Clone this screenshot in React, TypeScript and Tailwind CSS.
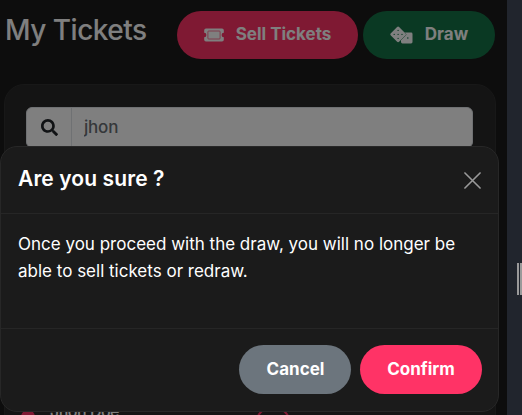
import React, { useState } from "react";
import { FaSearch } from "react-icons/fa";

type ButtonProps = {
  className: string;
  children: React.ReactNode;
  onClick?: () => void;
};

const PillButton = ({ className, children, onClick }: ButtonProps) => {
  return (
    <button
      type="button"
      onClick={onClick}
      className={`flex items-center justify-center rounded-full text-[17px] font-bold text-white ${className}`}
    >
      {children}
    </button>
  );
};

const TicketIcon = () => {
  return (
    <svg className="h-[14px] w-5" viewBox="0 0 20 14" fill="currentColor">
      <path d="M2 .5h16a1.8 1.8 0 0 1 1.8 1.8v2.5a2.2 2.2 0 0 0 0 4.4v2.5a1.8 1.8 0 0 1-1.8 1.8H2a1.8 1.8 0 0 1-1.8-1.8V9.2a2.2 2.2 0 0 0 0-4.4V2.3A1.8 1.8 0 0 1 2 .5z" />
      <rect
        x="3.9"
        y="3"
        width="12.2"
        height="8"
        rx="0.8"
        fill="none"
        stroke="#ff3366"
        strokeOpacity="0.75"
        strokeWidth="0.9"
      />
    </svg>
  );
};

const DiceIcon = () => {
  return (
    <svg className="h-[18px] w-[23px]" viewBox="0 0 23 18" fill="currentColor">
      <rect x="11" y="6.5" width="11.5" height="11" rx="1.4" />
      <path
        d="M6.9 1.2a1.7 1.7 0 0 1 2.4 0l6 6a1.7 1.7 0 0 1 0 2.4l-6 6a1.7 1.7 0 0 1-2.4 0l-6-6a1.7 1.7 0 0 1 0-2.4z"
        stroke="#157347"
        strokeWidth="0.8"
        paintOrder="stroke"
      />
      <g fill="#157347">
        <circle cx="8.1" cy="4.4" r="0.65" />
        <circle cx="4.2" cy="8.4" r="0.65" />
        <circle cx="8.1" cy="8.4" r="0.65" />
        <circle cx="12" cy="8.4" r="0.65" />
        <circle cx="8.1" cy="12.4" r="0.65" />
        <circle cx="17.8" cy="12" r="0.75" />
      </g>
    </svg>
  );
};

const TicketsPage = () => {
  const [search, setSearch] = useState("jhon");

  return (
    <div className="h-[415px] w-[507px] overflow-hidden bg-[#1a1a1a] pt-[11px]">
      <div className="flex h-12 pl-[5px]">
        <h1 className="w-[172px] pt-px text-[28px] leading-9 font-medium tracking-[-0.5px] whitespace-nowrap text-white">
          My Tickets
        </h1>
        <PillButton className="h-12 w-[181px] gap-3 bg-[#ff3366]">
          <TicketIcon />
          Sell Tickets
        </PillButton>
        <PillButton className="ml-[5px] h-12 w-[132px] gap-3 bg-[#157347]">
          <DiceIcon />
          Draw
        </PillButton>
      </div>

      <div className="mt-[25px] ml-1 h-[420px] w-[492px] rounded-[20px] border border-[#303030] bg-[#282828] pt-[22px] pl-[21px]">
        <div className="flex h-[41px] w-[447px] overflow-hidden rounded-md border border-[#dee2e6] bg-white">
          <span className="flex w-[45px] shrink-0 items-center justify-center border-r border-[#dee2e6] text-[#212529]">
            <FaSearch className="size-[17px]" />
          </span>
          <input
            className="w-full px-3 text-[17px] font-medium tracking-[-0.2px] text-[#6b7075] outline-none"
            value={search}
            onChange={(e) => setSearch(e.target.value)}
          />
        </div>
        <div className="mt-[251px] flex h-10 items-start text-white">
          <span className="mt-[11px] ml-[-5px] size-[14px] rounded-full bg-[#ff3366]" />
          <span className="ml-[15px] w-[205px] text-[16px] leading-6 font-medium tracking-[-0.5px]">
            Jhon Doe
          </span>
          <span className="mt-[7px] size-9 rounded-full border-2 border-[#ff3366]" />
        </div>
      </div>
    </div>
  );
};

type ModalProps = {
  onClose: () => void;
};

const ConfirmModal = ({ onClose }: ModalProps) => {
  return (
    <div className="absolute inset-y-0 left-0 w-[507px] bg-black/50 pt-[146px]">
      <div className="flex h-[266px] w-[499px] flex-col rounded-[17px] border border-[#272727] bg-[#1b1b1b] text-white">
        <div className="flex h-[67px] items-center justify-between border-b border-[#262626] pr-[17px] pl-[17px]">
          <h5 className="pb-0.5 text-[21px] font-semibold tracking-[0.1px]">
            Are you sure ?
          </h5>
          <button type="button" aria-label="Close" onClick={onClose}>
            <svg
              className="size-[17px]"
              viewBox="0 0 18 18"
              fill="none"
              stroke="#999999"
              strokeWidth="1.7"
              strokeLinecap="round"
            >
              <path d="M1 1l16 16M17 1L1 17" />
            </svg>
          </button>
        </div>
        <p className="h-[114px] px-[17px] pt-[17px] text-[17px] leading-[27px]">
          Once you proceed with the draw, you will no longer be able to sell
          tickets or redraw.
        </p>
        <div className="flex flex-1 items-center justify-end gap-[9px] border-t border-[#262626] pr-4 pb-px">
          <PillButton
            className="h-[49px] w-[112px] bg-[#6c757d] pl-px"
            onClick={onClose}
          >
            Cancel
          </PillButton>
          <PillButton
            className="h-[49px] w-[122px] bg-[#ff3366]"
            onClick={onClose}
          >
            Confirm
          </PillButton>
        </div>
      </div>
    </div>
  );
};

const App = () => {
  const [open, setOpen] = useState(true);

  return (
    <div className="relative flex h-[415px] w-[522px] overflow-hidden bg-[#21252d] font-['Inter',sans-serif]">
      <TicketsPage />
      {open && <ConfirmModal onClose={() => setOpen(false)} />}
      <div className="flex flex-1 items-center justify-end gap-px pt-[142px]">
        <span className="h-8 w-[2px] bg-[#9a9a9a]" />
        <span className="h-8 w-[2px] bg-[#9a9a9a]" />
      </div>
    </div>
  );
};

export default App;
